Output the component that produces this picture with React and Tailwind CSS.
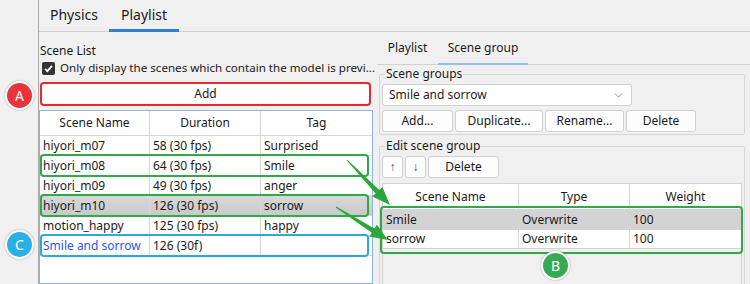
import React from "react";
import { ChevronDown } from "lucide-react";

const leftRows = [
  { n: "hiyori_m07", d: "58 (30 fps)", t: "Surprised" },
  { n: "hiyori_m08", d: "64 (30 fps)", t: "Smile" },
  { n: "hiyori_m09", d: "49 (30 fps)", t: "anger" },
  { n: "hiyori_m10", d: "126 (30 fps)", t: "sorrow", sel: true },
  { n: "motion_happy", d: "125 (30 fps)", t: "happy" },
  { n: "Smile and sorrow", d: "126 (30f)", t: "", blue: true },
];

function Btn({ children, className = "" }) {
  return (
    <div
      className={
        "h-[22px] flex items-center justify-center bg-[#fdfdfd] border border-[#d0d0d0] rounded-[3px] " +
        className
      }
    >
      {children}
    </div>
  );
}

function Badge({ letter, color, className }) {
  return (
    <div
      className={
        "absolute w-[29px] h-[29px] rounded-full border-2 border-white shadow-[0_0_2px_rgba(0,0,0,0.35)] flex items-center justify-center text-white text-[14px] " +
        color +
        " " +
        className
      }
    >
      {letter}
    </div>
  );
}

export default function App() {
  return (
    <div className="relative w-[750px] h-[284px] overflow-hidden bg-[#f0f0f0] text-[12px] text-[#1a1a1a] font-['Noto_Sans',sans-serif] flex">
      {/* gutter */}
      <div className="w-[38px] shrink-0" />

      {/* left panel */}
      <div className="w-[337px] shrink-0 border-l border-[#a8a8a8] flex flex-col">
        <div className="h-[32px] shrink-0 border-b border-[#cfcfcf] flex items-end">
          <div className="w-[70px] h-[31px] flex items-center justify-center text-[14px] pb-[2px]">Physics</div>
          <div className="w-[70px] h-[31px] flex items-center justify-center text-[14px] pb-[2px] border-b-[3px] border-[#2f7fd6] -mb-[1px]">
            Playlist
          </div>
        </div>
        <div className="h-[12px] shrink-0" />
        <div className="h-[14px] shrink-0 leading-[14px] pl-[1px]">Scene List</div>
        <div className="h-[20px] shrink-0 flex items-center pl-[3px] gap-[5px]">
          <div className="w-[13px] h-[13px] shrink-0 rounded-[2px] bg-[#333333] flex items-center justify-center">
            <svg width="11" height="11" viewBox="0 0 11 11">
              <path d="M2 5.8 L4.4 8.2 L9 2.8" stroke="white" strokeWidth="1.8" fill="none" />
            </svg>
          </div>
          <span className="whitespace-nowrap overflow-hidden text-[11.6px]">Only display the scenes which contain the model is previ...</span>
        </div>
        <div className="h-[4px] shrink-0" />
        <div className="mx-[1px] shrink-0 w-[331px] h-[24px] rounded-[4px] border-2 border-[#e8292b] bg-[#fdfdfd] flex items-center justify-center">
          Add
        </div>
        <div className="h-[4px] shrink-0" />
        <div className="w-[334px] flex-1 border border-[#8fb2de] bg-white flex flex-col">
          <div className="h-[25px] shrink-0 grid grid-cols-[110px_111px_111px] border-b border-[#d6d6d6]">
            <div className="flex items-center justify-center border-r border-[#d6d6d6]">Scene Name</div>
            <div className="flex items-center justify-center border-r border-[#d6d6d6]">Duration</div>
            <div className="flex items-center justify-center">Tag</div>
          </div>
          {leftRows.map((r, i) => (
            <div
              key={i}
              className={
                "h-[20px] shrink-0 grid grid-cols-[110px_111px_111px] border-b border-[#dadada] " +
                (r.sel ? "bg-gradient-to-b from-[#d9d9d9] to-[#c9c9c9]" : "")
              }
            >
              <div className={"flex items-center pl-[3px] border-r border-[#d6d6d6] whitespace-nowrap " + (r.blue ? "text-[#2f55e8]" : "")}>
                {r.n}
              </div>
              <div className="flex items-center pl-[3px] border-r border-[#d6d6d6] whitespace-nowrap">{r.d}</div>
              <div className="flex items-center pl-[3px] whitespace-nowrap">{r.t}</div>
            </div>
          ))}
        </div>
      </div>

      {/* right panel */}
      <div className="flex-1 flex flex-col">
        <div className="h-[32px] shrink-0 border-b border-[#cfcfcf]" />
        <div className="ml-[2px] h-[33px] shrink-0 border-b border-[#d3d3d3] flex items-end">
          <div className="w-[61px] h-[32px] flex items-center justify-center">Playlist</div>
          <div className="w-[90px] h-[32px] flex items-center justify-center border-b-2 border-[#90bff0] -mb-[1px]">
            Scene group
          </div>
        </div>
        <div className="h-[9px] shrink-0" />
        {/* Scene groups box */}
        <div className="relative shrink-0 ml-[4px] w-[366px] h-[61px] border border-[#d6d6d6] rounded-[2px] px-[2px] pt-[9px]">
          <div className="absolute -top-[9px] left-[5px] px-[1px] bg-[#f0f0f0] leading-[16px]">Scene groups</div>
          <div className="w-[250px] h-[22px] bg-white border border-[#d0d0d0] rounded-[3px] flex items-center justify-between pl-[6px] pr-[6px]">
            <span>Smile and sorrow</span>
            <ChevronDown size={13} strokeWidth={1.3} color="#606060" />
          </div>
          <div className="mt-[4px] flex gap-[2px]">
            <Btn className="w-[71px]">Add...</Btn>
            <Btn className="w-[88px]">Duplicate...</Btn>
            <Btn className="w-[79px]">Rename...</Btn>
            <Btn className="w-[70px]">Delete</Btn>
          </div>
        </div>
        <div className="h-[11px] shrink-0" />
        {/* Edit scene group box */}
        <div className="relative ml-[4px] w-[366px] flex-1 border border-[#d6d6d6] border-b-0 rounded-t-[2px] px-[2px] pt-[9px] flex flex-col">
          <div className="absolute -top-[9px] left-[5px] px-[1px] bg-[#f0f0f0] leading-[16px]">Edit scene group</div>
          <div className="flex gap-[2px]">
            <Btn className="w-[21px] text-[#4a4a4a]">↑</Btn>
            <Btn className="w-[21px] text-[#4a4a4a]">↓</Btn>
            <Btn className="w-[71px]">Delete</Btn>
          </div>
          <div className="mt-[5px] w-[360px] flex-1 border border-[#d3d3d3] border-b-0 flex flex-col">
            <div className="h-[26px] bg-white grid grid-cols-[136px_111px_111px] border-b border-[#d6d6d6]">
              <div className="flex items-center justify-center border-r border-[#d6d6d6]">Scene Name</div>
              <div className="flex items-center justify-center border-r border-[#d6d6d6]">Type</div>
              <div className="flex items-center justify-center">Weight</div>
            </div>
            <div className="h-[20px] bg-[#d3d3d3] grid grid-cols-[136px_111px_111px]">
              <div className="flex items-center pl-[3px]">Smile</div>
              <div className="flex items-center pl-[3px]">Overwrite</div>
              <div className="flex items-center pl-[3px]">100</div>
            </div>
            <div className="h-[19px] bg-white grid grid-cols-[136px_111px_111px] border-b border-[#d3d3d3]">
              <div className="flex items-center pl-[3px] border-r border-[#d6d6d6]">sorrow</div>
              <div className="flex items-center pl-[3px] border-r border-[#d6d6d6]">Overwrite</div>
              <div className="flex items-center pl-[3px]">100</div>
            </div>
          </div>
        </div>
      </div>

      {/* annotations */}
      <div className="absolute left-[40px] top-[154px] w-[329px] h-[23px] rounded-[4px] border-2 border-[#33a84a]" />
      <div className="absolute left-[40px] top-[194px] w-[329px] h-[23px] rounded-[4px] border-2 border-[#33a84a]" />
      <div className="absolute left-[40px] top-[234px] w-[329px] h-[23px] rounded-[4px] border-2 border-[#2aaae2]" />
      <div className="absolute left-[380px] top-[206px] w-[363px] h-[48px] rounded-[4px] border-2 border-[#33a84a]" />

      <svg className="absolute left-0 top-0" width="750" height="284" viewBox="0 0 750 284">
        <polygon
          fill="#2aa63d"
          points="346.6,160.3 375.6,193.4 372.4,196.5 390,205 382.4,186.9 379.2,190.0 347.4,159.7"
        />
        <polygon
          fill="#2aa63d"
          points="335.7,207.4 371.8,232.7 369.3,236.5 388,240 376.9,224.7 374.4,228.5 336.3,206.6"
        />
      </svg>

      <Badge letter="A" color="bg-[#e8333a]" className="left-[5px] top-[81px]" />
      <Badge letter="C" color="bg-[#2bb0e6]" className="left-[5px] top-[230px]" />
      <Badge letter="B" color="bg-[#37a955]" className="left-[541px] top-[251px]" />
    </div>
  );
}
